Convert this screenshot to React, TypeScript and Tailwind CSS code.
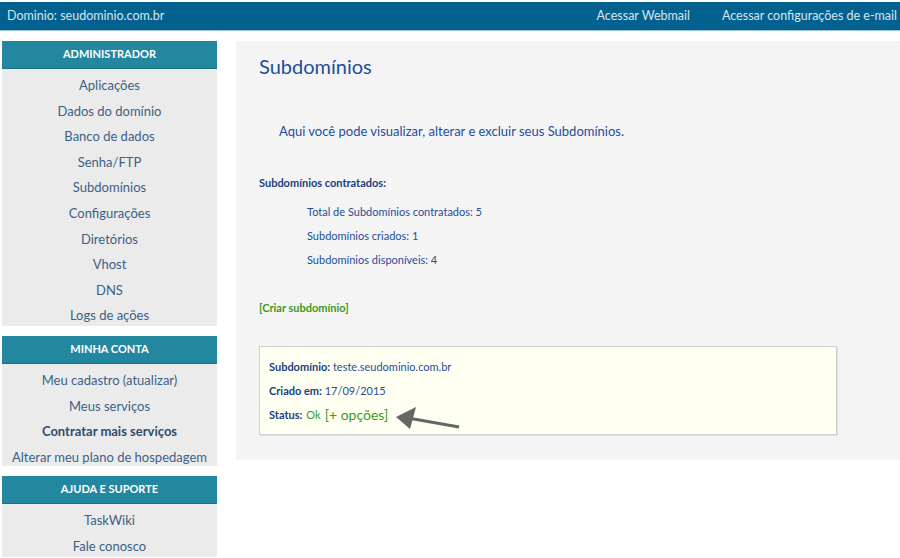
import React from "react";

const font = { fontFamily: 'Lato, "Open Sans", sans-serif' };

function SideHeader({ children }: { children: React.ReactNode }) {
  return (
    <div className="h-[28px] bg-[#22879f] text-white font-bold text-[11px] flex items-center justify-center border-b border-[#1b6f83]">
      {children}
    </div>
  );
}

function SideItem({ children, bold }: { children: React.ReactNode; bold?: boolean }) {
  return (
    <div className={`h-[25.6px] shrink-0 flex items-center justify-center text-[13px] ${bold ? "font-bold text-[#2f4c6e]" : "text-[#3d5f86]"}`}>
      {children}
    </div>
  );
}

export default function App() {
  return (
    <div className="w-[900px] h-[558px] bg-white overflow-hidden" style={font}>
      <div className="h-[2px] bg-white" />
      <div className="h-[28px] bg-[#03618f] flex items-center text-[12.5px] text-[#d6e6f0] pl-[7px]">
        <span>Dominio: seudominio.com.br</span>
        <div className="ml-auto flex gap-[32px] pr-[3px]">
          <span>Acessar Webmail</span>
          <span>Acessar configurações de e-mail</span>
        </div>
      </div>
      <div className="h-[1px] bg-[#9cc3d8]" />
      <div className="flex pt-[10px] gap-[19px] pl-[2px]">
        <div className="w-[215px] flex flex-col">
          <SideHeader>ADMINISTRADOR</SideHeader>
          <div className="bg-[#ebebeb] pt-[4px] h-[257px] flex flex-col overflow-hidden">
            {["Aplicações", "Dados do domínio", "Banco de dados", "Senha/FTP", "Subdomínios", "Configurações", "Diretórios", "Vhost", "DNS", "Logs de ações"].map((t) => (
              <SideItem key={t}>{t}</SideItem>
            ))}
          </div>
          <div className="h-[10px]" />
          <SideHeader>MINHA CONTA</SideHeader>
          <div className="bg-[#ebebeb] pt-[4px] h-[102px] flex flex-col overflow-hidden">
            <SideItem>Meu cadastro (atualizar)</SideItem>
            <SideItem>Meus serviços</SideItem>
            <SideItem bold>Contratar mais serviços</SideItem>
            <SideItem>Alterar meu plano de hospedagem</SideItem>
          </div>
          <div className="h-[10px]" />
          <SideHeader>AJUDA E SUPORTE</SideHeader>
          <div className="bg-[#ebebeb] pt-[4px] h-[53px] flex flex-col overflow-hidden">
            <SideItem>TaskWiki</SideItem>
            <SideItem>Fale conosco</SideItem>
          </div>
        </div>
        <div className="flex-1 self-start h-[419px] bg-[#f4f4f4] pl-[23px] pr-[63px] text-[#1f4e9a]">
          <div className="text-[20px] pt-[12px] leading-[26px] text-[#1f4e9a]">Subdomínios</div>
          <div className="text-[13px] pl-[20px] mt-[43px] leading-[18px]">Aqui você pode visualizar, alterar e excluir seus Subdomínios.</div>
          <div className="text-[11px] font-bold mt-[35px] leading-[16px] text-[#1a3f80]">Subdomínios contratados:</div>
          <div className="pl-[48px] text-[11px] mt-[13px] leading-[16px] flex flex-col gap-[8px]">
            <div>Total de Subdomínios contratados: 5</div>
            <div>Subdomínios criados: 1</div>
            <div>Subdomínios disponíveis: 4</div>
          </div>
          <div className="text-[11px] font-bold mt-[32px] leading-[16px] text-[#3d9a1c]">[Criar subdomínio]</div>
          <div className="mt-[30px] bg-[#fffff2] border border-[#d0d0d0] shadow-[1px_1px_0_#e0e0e0] h-[89px] pl-[9px] pt-[12px] text-[11px] relative">
            <div className="leading-[16px]"><b className="text-[#1a3f80]">Subdomínio:</b> teste.seudominio.com.br</div>
            <div className="leading-[16px] mt-[8px]"><b className="text-[#1a3f80]">Criado em:</b> 17/09/2015</div>
            <div className="leading-[18px] mt-[7px] flex items-end gap-[4px]">
              <b className="text-[#1a3f80]">Status:</b>
              <span className="text-[#3d9a1c]">Ok</span>
              <span className="text-[14px] text-[#3d9a1c] leading-[18px]">[+ opções]</span>
            </div>
            <svg className="absolute left-[134px] top-[58px]" width="70" height="30" viewBox="0 0 70 30">
              <line x1="14" y1="13" x2="65" y2="22" stroke="#666" strokeWidth="3.2" />
              <polygon points="2,12 22,2 16,24" fill="#666" />
            </svg>
          </div>
        </div>
      </div>
    </div>
  );
}
